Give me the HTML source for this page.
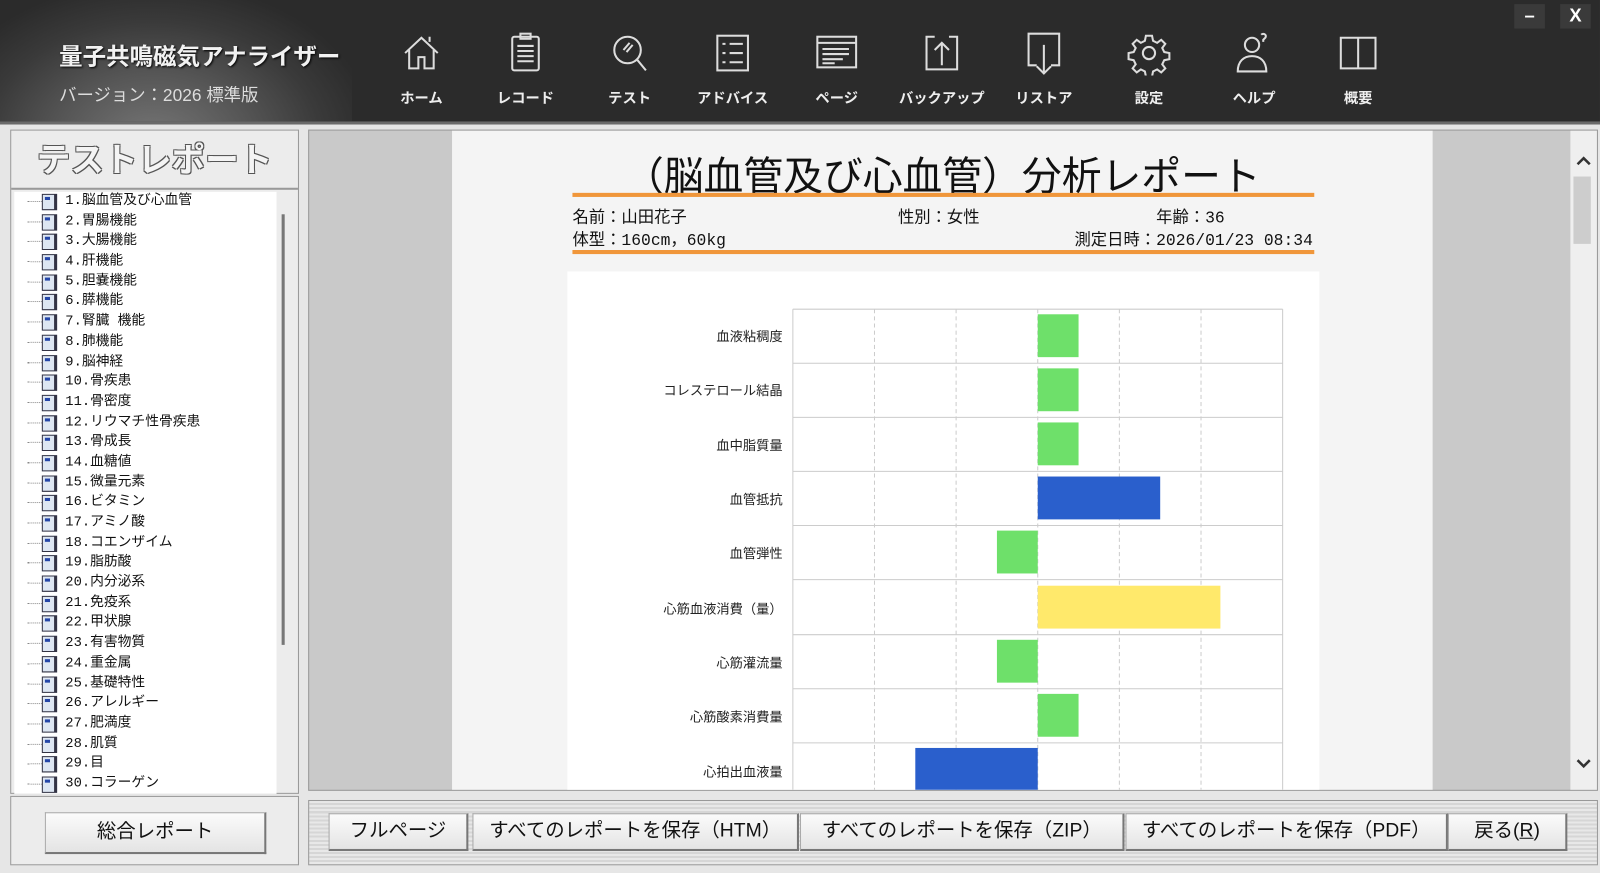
<!DOCTYPE html>
<html><head><meta charset="utf-8"><style>
*{margin:0;padding:0;box-sizing:border-box}
body{width:1600px;height:873px;overflow:hidden;background:#e6e6e6;font-family:"Liberation Sans","Noto Sans CJK JP",sans-serif;position:relative}
#w{position:absolute;left:0;top:0;width:1568px;height:856px;transform:scale(1.0204);transform-origin:0 0}
.hdr{position:absolute;left:0;top:0;width:1568px;height:122px;background:#2b2b2b;border-bottom:3px solid #6a6a6a}
.bodyimg{position:absolute;left:0;top:0;width:345px;height:119px;background:radial-gradient(ellipse at 150px 140px,#777 0%,#555 35%,#3a3a3a 60%,#2b2b2b 80%)}
.t1{position:absolute;left:58px;top:36px;color:#f2f2f2;font-size:23px;font-weight:bold;text-shadow:1px 1px 2px #000}
.t2{position:absolute;left:58px;top:79px;color:#ddd;font-size:17px}
.ic{position:absolute;top:30px;width:90px;text-align:center;color:#eee;font-size:14px;font-weight:bold;white-space:nowrap}
.ic svg{display:block;margin:0 auto 12px;width:44px;height:44px}
.winb{position:absolute;top:4px;width:30px;height:24px;background:#3a3a3a;color:#fff;font-size:18px;text-align:center;line-height:22px;font-weight:bold}
.lp{position:absolute;left:10px;top:127px;width:283px;height:651px;border:1px solid #999;background:#ececec}
.lpt{height:58px;text-align:center;font-size:33px;color:#f4f4f4;line-height:58px;font-weight:bold;text-shadow:1px 1px 0 #555,-1px -1px 0 #555,1px -1px 0 #555,-1px 1px 0 #555;border-bottom:2px solid #999}
.list{position:absolute;left:3px;top:60px;width:257px;height:590px;background:#fff;overflow:hidden}
.li{height:19.7px;font-size:13.5px;position:relative;padding-left:50px;line-height:19px;font-family:"Liberation Mono","Noto Sans CJK JP",monospace;color:#111}
.li:before{content:"";position:absolute;left:13px;top:9px;width:14px;border-top:1px dotted #888}
.li i{position:absolute;left:27px;top:2px;width:15px;height:16px;border:1px solid #334;background:#dde6f2;border-right:3px solid #334}
.li i:after{content:"";position:absolute;left:2px;top:2px;width:5px;height:3px;background:#2446a8}
.sb{position:absolute;left:276px;top:210px;width:3px;height:422px;background:#777}
.bb{position:absolute;left:10px;top:780px;width:283px;height:68px;border:1px solid #999;background:#ececec}
.btn{position:absolute;background:linear-gradient(#fbfbfb,#e4e4e4);border:1px solid #aaa;border-right:2px solid #777;border-bottom:2px solid #777;font-size:19px;text-align:center;color:#111;line-height:34px;font-family:"Liberation Sans","Noto Sans CJK JP",sans-serif}
.mp{position:absolute;left:302px;top:127px;width:1264px;height:648px;background:#c9c9c9;border:1px solid #999;overflow:hidden}
.page{position:absolute;left:140px;top:0;width:961px;height:648px;background:#f4f4f4}
.vsb{position:absolute;right:0;top:0;width:26px;height:648px;background:#efefef}
.ttl{position:absolute;left:0;width:961px;top:14px;text-align:center;font-size:39px;color:#111}
.or{position:absolute;left:118px;width:727px;height:4px;background:#f0963a}
.inf{position:absolute;font-size:16px;color:#111;font-family:"Liberation Mono","Noto Sans CJK JP",monospace}
.chart{position:absolute;left:113px;top:138px;width:737px;height:520px;background:#fff}
.bt{position:absolute;left:302px;top:784px;width:1264px;height:64px;border:1px solid #999;background:repeating-linear-gradient(#e8e8e8 0 2px,#d6d6d6 2px 4px)}
</style></head><body><div id="w">
<div class="hdr"><div class="bodyimg"></div>
<div class="t1">量子共鳴磁気アナライザー</div>
<div class="t2">バージョン：2026 標準版</div>
<div class="ic" style="left:368px"><svg viewBox="0 0 44 44" fill="none" stroke="#ddd" stroke-width="2"><path d="M6 22L22 7l16 15M10 19v18h9V26h6v11h9V19M30 11v-5"/></svg>ホーム</div>
<div class="ic" style="left:470px"><svg viewBox="0 0 44 44" fill="none" stroke="#ddd" stroke-width="2"><rect x="9" y="6" width="26" height="33" rx="2"/><rect x="17" y="3" width="10" height="5"/><path d="M14 15h16M14 20h16M14 25h16M14 30h16"/></svg>レコード</div>
<div class="ic" style="left:572px"><svg viewBox="0 0 44 44" fill="none" stroke="#ddd" stroke-width="2"><circle cx="20" cy="19" r="13"/><path d="M29 28l9 11M16 19l6-7M19 21l6-7"/></svg>テスト</div>
<div class="ic" style="left:673px"><svg viewBox="0 0 44 44" fill="none" stroke="#ddd" stroke-width="2"><rect x="7" y="5" width="30" height="34"/><path d="M12 13h3M19 13h13M12 22h3M19 22h13M12 31h3M19 31h13"/></svg>アドバイス</div>
<div class="ic" style="left:775px"><svg viewBox="0 0 44 44" fill="none" stroke="#ddd" stroke-width="2"><rect x="3" y="6" width="38" height="30"/><path d="M3 12h38M8 18h26M8 23h26M8 28h20M8 32h12"/></svg>ページ</div>
<div class="ic" style="left:878px"><svg viewBox="0 0 44 44" fill="none" stroke="#ddd" stroke-width="2"><path d="M15 6H7v32h30V6h-8M22 34V12M15 19l7-7 7 7"/></svg>バックアップ</div>
<div class="ic" style="left:978px"><svg viewBox="0 0 44 44" fill="none" stroke="#ddd" stroke-width="2"><path d="M15 34H7V3h30v31h-8M22 14v28M15 35l7 7 7-7"/></svg>リストア</div>
<div class="ic" style="left:1081px"><svg viewBox="0 0 44 44" fill="none" stroke="#ddd" stroke-width="2"><circle cx="22" cy="22" r="6"/><path d="M19 5h6l1 5 4 2 4-3 4 4-3 4 2 4 5 1v6l-5 1-2 4 3 4-4 4-4-3-4 2-1 5h-6l-1-5-4-2-4 3-4-4 3-4-2-4-5-1v-6l5-1 2-4-3-4 4-4 4 3 4-2z"/></svg>設定</div>
<div class="ic" style="left:1184px"><svg viewBox="0 0 44 44" fill="none" stroke="#ddd" stroke-width="2"><circle cx="20" cy="14" r="7"/><path d="M6 40c0-10 6-15 14-15s14 5 14 15zM29 4c2-2 6 0 4 3l-2 2v2"/></svg>ヘルプ</div>
<div class="ic" style="left:1286px"><svg viewBox="0 0 44 44" fill="none" stroke="#ddd" stroke-width="2"><path d="M5 7h17v30H5zM22 7h17v30H22z"/></svg>概要</div>
<div class="winb" style="left:1484px">–</div><div class="winb" style="left:1529px">X</div>
</div>

<div class="lp"><div class="lpt">テストレポート</div>
<div class="list">
<div class="li"><i></i>1.脳血管及び心血管</div><div class="li"><i></i>2.胃腸機能</div><div class="li"><i></i>3.大腸機能</div><div class="li"><i></i>4.肝機能</div><div class="li"><i></i>5.胆嚢機能</div><div class="li"><i></i>6.膵機能</div><div class="li"><i></i>7.腎臓 機能</div><div class="li"><i></i>8.肺機能</div><div class="li"><i></i>9.脳神経</div><div class="li"><i></i>10.骨疾患</div><div class="li"><i></i>11.骨密度</div><div class="li"><i></i>12.リウマチ性骨疾患</div><div class="li"><i></i>13.骨成長</div><div class="li"><i></i>14.血糖値</div><div class="li"><i></i>15.微量元素</div><div class="li"><i></i>16.ビタミン</div><div class="li"><i></i>17.アミノ酸</div><div class="li"><i></i>18.コエンザイム</div><div class="li"><i></i>19.脂肪酸</div><div class="li"><i></i>20.内分泌系</div><div class="li"><i></i>21.免疫系</div><div class="li"><i></i>22.甲状腺</div><div class="li"><i></i>23.有害物質</div><div class="li"><i></i>24.重金属</div><div class="li"><i></i>25.基礎特性</div><div class="li"><i></i>26.アレルギー</div><div class="li"><i></i>27.肥満度</div><div class="li"><i></i>28.肌質</div><div class="li"><i></i>29.目</div><div class="li"><i></i>30.コラーゲン</div><div class="li"><i></i></div>
</div></div>
<div class="sb"></div>
<div class="bb"><div class="btn" style="left:33px;top:15px;width:217px;height:41px;line-height:38px">総合レポート</div></div>

<div class="mp"><div class="page">
<div class="ttl">（脳血管及び心血管）分析レポート</div>
<div class="or" style="top:61px"></div>
<div class="inf" style="left:118px;top:71px">名前：山田花子</div>
<div class="inf" style="left:437px;top:71px">性別：女性</div>
<div class="inf" style="left:690px;top:71px">年齢：36</div>
<div class="inf" style="left:118px;top:93px">体型：160cm，60kg</div>
<div class="inf" style="left:610px;top:93px">測定日時：2026/01/23 08:34</div>
<div class="or" style="top:117px"></div>
<div class="chart">
<svg width="737" height="520" style="position:absolute;left:0;top:0" font-family="Liberation Sans,Noto Sans CJK JP,sans-serif" font-size="13">
<g stroke="#ccc" stroke-dasharray="4 3"><line x1="301" y1="37" x2="301" y2="520"/><line x1="381" y1="37" x2="381" y2="520"/><line x1="461" y1="37" x2="461" y2="520"/><line x1="541" y1="37" x2="541" y2="520"/><line x1="621" y1="37" x2="621" y2="520"/></g>
<g stroke="#ccc"><line x1="221" y1="37" x2="221" y2="520"/><line x1="701" y1="37" x2="701" y2="520"/>
<line x1="221" y1="37" x2="701" y2="37"/><line x1="221" y1="90" x2="701" y2="90"/><line x1="221" y1="143" x2="701" y2="143"/><line x1="221" y1="196" x2="701" y2="196"/><line x1="221" y1="249" x2="701" y2="249"/><line x1="221" y1="302" x2="701" y2="302"/><line x1="221" y1="356" x2="701" y2="356"/><line x1="221" y1="409" x2="701" y2="409"/><line x1="221" y1="462" x2="701" y2="462"/></g>
<g fill="#6ee06a"><rect x="461" y="42" width="40" height="42"/><rect x="461" y="95" width="40" height="42"/><rect x="461" y="148" width="40" height="42"/><rect x="421" y="254" width="40" height="42"/><rect x="421" y="361" width="40" height="42"/><rect x="461" y="414" width="40" height="42"/></g>
<rect x="461" y="201" width="120" height="42" fill="#2a5fcc"/>
<rect x="461" y="308" width="179" height="42" fill="#ffe96b"/>
<rect x="341" y="467" width="120" height="42" fill="#2a5fcc"/>
<g text-anchor="end" fill="#222"><text x="211" y="68">血液粘稠度</text><text x="211" y="121">コレステロール結晶</text><text x="211" y="175">血中脂質量</text><text x="211" y="228">血管抵抗</text><text x="211" y="281">血管弾性</text><text x="211" y="335">心筋血液消費（量）</text><text x="211" y="388">心筋灌流量</text><text x="211" y="441">心筋酸素消費量</text><text x="211" y="495">心拍出血液量</text></g>
</svg></div>
</div>
<div class="vsb"><svg width="26" height="648"><path d="M7 33l6-6 6 6" stroke="#333" stroke-width="2.5" fill="none"/><rect x="3" y="45" width="17" height="66" fill="#cdcdcd"/><path d="M7 617l6 6 6-6" stroke="#333" stroke-width="2.5" fill="none"/></svg></div>
</div>

<div class="bt">
<div class="btn" style="left:19px;top:12px;width:137px;height:37px">フルページ</div>
<div class="btn" style="left:160px;top:12px;width:320px;height:37px">すべてのレポートを保存（HTM）</div>
<div class="btn" style="left:481px;top:12px;width:318px;height:37px">すべてのレポートを保存（ZIP）</div>
<div class="btn" style="left:800px;top:12px;width:316px;height:37px">すべてのレポートを保存（PDF）</div>
<div class="btn" style="left:1116px;top:12px;width:117px;height:37px">戻る(<u>R</u>)</div>
</div>
</div></body></html>
